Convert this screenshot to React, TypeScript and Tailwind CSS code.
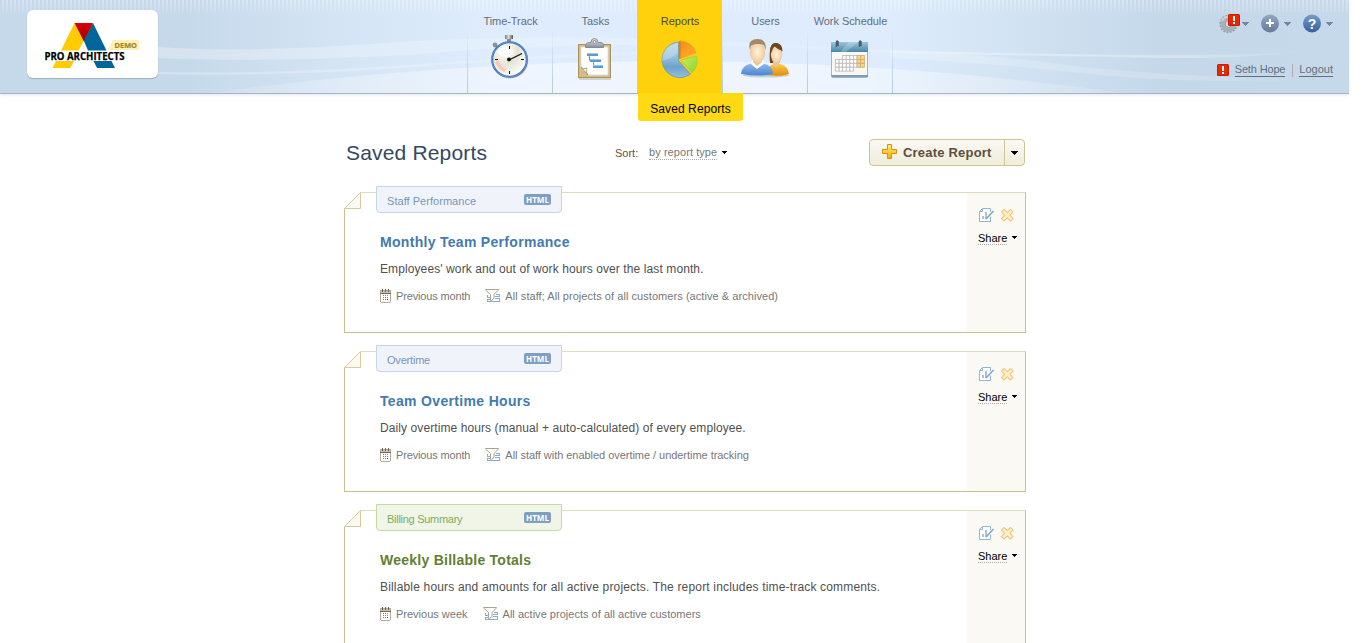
import React from "react";

function Caret({ className = "" }: { className?: string }) {
  return (
    <svg className={className} width="7" height="4" viewBox="0 0 7 4" shapeRendering="crispEdges">
      <path d="M0 0H7V1H6V2H5V3H4V4H3V3H2V2H1V1H0Z" fill="currentColor" />
    </svg>
  );
}

function SmallCaret({ className = "" }: { className?: string }) {
  return (
    <svg className={className} width="5" height="3" viewBox="0 0 5 3" shapeRendering="crispEdges">
      <path d="M0 0H5V1H4V2H3V3H2V2H1V1H0Z" fill="currentColor" />
    </svg>
  );
}

function Waves() {
  return (
    <svg className="absolute inset-0" width="1349" height="93" viewBox="0 0 1349 93">
      <defs>
        <linearGradient id="edge" x1="0" x2="1">
          <stop offset="0" stopColor="#c6d9ea" />
          <stop offset=".14" stopColor="#c6d9ea" />
          <stop offset=".26" stopColor="#d5e5f5" />
          <stop offset=".36" stopColor="#deecfd" />
          <stop offset=".5" stopColor="#dfecff" />
          <stop offset=".66" stopColor="#deecfd" />
          <stop offset=".75" stopColor="#d2e3f3" />
          <stop offset=".86" stopColor="#c5d8e9" />
          <stop offset="1" stopColor="#c6d9ea" />
        </linearGradient>
        <linearGradient id="stripeFade" x1="0" x2="0" y1="0" y2="1">
          <stop offset="0" stopColor="#fff" stopOpacity=".32" />
          <stop offset="1" stopColor="#fff" stopOpacity=".08" />
        </linearGradient>
        <linearGradient id="bandR" x1="0" x2="1">
          <stop offset="0" stopColor="#fff" stopOpacity=".35" />
          <stop offset=".7" stopColor="#fff" stopOpacity=".3" />
          <stop offset="1" stopColor="#fff" stopOpacity="0" />
        </linearGradient>
        <linearGradient id="bandL" x1="0" x2="1">
          <stop offset="0" stopColor="#fff" stopOpacity=".3" />
          <stop offset="1" stopColor="#fff" stopOpacity=".12" />
        </linearGradient>
        <linearGradient id="floor" x1="0" x2="1">
          <stop offset="0" stopColor="#fff" stopOpacity=".1" />
          <stop offset=".35" stopColor="#fff" stopOpacity=".5" />
          <stop offset=".65" stopColor="#fff" stopOpacity=".5" />
          <stop offset="1" stopColor="#fff" stopOpacity=".1" />
        </linearGradient>
        <pattern id="stripes" width="4" height="13" patternUnits="userSpaceOnUse">
          <rect x="2" width="2" height="13" fill="url(#stripeFade)" />
        </pattern>
      </defs>
      <rect width="1349" height="93" fill="url(#edge)" />
      <path d="M208 93Q440 62 670 61Q900 62 1125 93Z" fill="url(#floor)" />
      <path d="M158 47Q240 53 370 44T640 38L890 50V53Q620 36 420 54Q270 63 158 58Z" fill="url(#bandL)" />
      <path d="M158 72Q280 75 450 62T700 51V53Q520 58 430 66Q290 77 158 74Z" fill="url(#bandL)" />
      <path d="M890 50Q1220 60 1312 50Q1240 61 1120 57Q1000 55 890 53Z" fill="url(#bandR)" />
      <path d="M890 52Q980 53 1060 64T1312 80Q1180 84 1080 73T890 58Z" fill="url(#bandR)" opacity=".55" />
      <rect width="1349" height="13" fill="url(#stripes)" />
    </svg>
  );
}

function Logo() {
  return (
    <div className="relative mt-[10px] ml-[27px] h-[68px] w-[131px] rounded-md bg-white shadow-[0_1px_1px_#9badc1,0_0_1px_#b5c5d7]">
      <svg width="131" height="68" viewBox="0 0 131 68">
        <defs>
          <linearGradient id="logoRed" x1="0" x2="0" y1="0" y2="1">
            <stop stopColor="#d00" />
            <stop offset="1" stopColor="#980000" />
          </linearGradient>
        </defs>
        <path d="M47.500 13L57 30.500L51.500 40.500H34Z" fill="#fc0" />
        <path d="M66 13L79.500 40.500H61L56.500 30Z" fill="#069" />
        <path d="M47.500 13H66L56.700 31Z" fill="url(#logoRed)" />
        <path d="M29 51H47L43.500 58H25.500Z" fill="#fc0" />
        <path d="M66.500 51H84.500L88 58H70Z" fill="#069" />
        <path d="M86 30H112V40H81Z" fill="#fff0b5" />
        <text x="87.500" y="37.500" textLength="22.500" lengthAdjust="spacingAndGlyphs" fontFamily="Open Sans" fontWeight="700" fontSize="7.600" fill="#a48724" stroke="#a48724" strokeWidth=".2">DEMO</text>
        <text x="17.500" y="49.500" textLength="80" lengthAdjust="spacingAndGlyphs" fontFamily="Open Sans" fontWeight="700" fontSize="10" fill="#000" stroke="#000" strokeWidth=".25">PRO ARCHITECTS</text>
      </svg>
    </div>
  );
}

function Stopwatch() {
  return (
    <svg width="48" height="48" viewBox="0 0 48 48">
      <defs>
        <radialGradient id="dial" cx=".35" cy=".25" r=".8">
          <stop stopColor="#fffff9" />
          <stop offset=".5" stopColor="#e5e5d7" />
          <stop offset="1" stopColor="#fff" />
        </radialGradient>
        <linearGradient id="knob">
          <stop stopColor="#777" />
          <stop offset=".45" stopColor="#ddd" />
          <stop offset="1" stopColor="#555" />
        </linearGradient>
      </defs>
      <rect x="19" y="2" width="8" height="4" fill="url(#knob)" />
      <rect x="21" y="6" width="4" height="3" fill="#888" />
      <circle cx="9" cy="12" r="2.400" fill="#929292" />
      <path d="M10 13l2 2" stroke="#777" strokeWidth="2" />
      <circle cx="24.200" cy="27.400" r="18" fill="#637486" opacity=".4" />
      <circle cx="23.500" cy="26.500" r="17.300" fill="url(#dial)" stroke="#3e6fb9" strokeWidth="2.100" />
      <circle cx="23.500" cy="26.500" r="17.500" fill="none" stroke="#73a3e0" strokeWidth=".7" />
      <path d="M9.500 28.500A14 14 0 0 0 18.500 39L20 36A11 11 0 0 1 13 28Z" fill="#f8c6b4" />
      <ellipse cx="20" cy="19" rx="8" ry="5" fill="#fff" opacity=".7" />
      <path d="M23.500 13v3M23.500 38v3M9 26.500h3M35 26.500h3" stroke="#111" />
      <path d="M23 27L36 20.500" stroke="#111" strokeWidth="1.300" />
      <circle cx="23" cy="26.500" r="2" fill="#111" />
    </svg>
  );
}

function Clipboard() {
  return (
    <svg width="48" height="48" viewBox="0 0 48 48">
      <defs>
        <linearGradient id="clip" x1="0" x2="0" y1="0" y2="1">
          <stop stopColor="#eee" />
          <stop offset="1" stopColor="#858d96" />
        </linearGradient>
      </defs>
      <rect x="8" y="12" width="32" height="35" fill="#8b8265" opacity=".3" />
      <rect x="7.500" y="11.500" width="32" height="33" fill="#d3bd86" stroke="#a9925c" />
      <path d="M10 14H37V42H17L10 35Z" fill="#fff" stroke="#dde0e2" />
      <path d="M10 34Q11 37 15 35Q15 39 17 42H10Z" fill="#d3bd86" />
      <path d="M10 34Q12 37 16 35Q14 39 17 42Z" fill="#f8f6ec" stroke="#9a8e68" strokeWidth=".7" />
      <path d="M14.500 14.500V12Q15 10 18 9.500H20Q20 5.500 23.500 5.500T27 9.500H30Q32.500 10 32.500 12V14.500Z" fill="url(#clip)" stroke="#848b92" />
      <circle cx="23.500" cy="9" r="1.500" fill="#fff" stroke="#888" />
      <path d="M18.500 23v4.500h3M22.500 29v4.500h3" fill="none" stroke="#5c9bd1" />
      <path d="M16 20h11v3H16zM19 26h11v3H19zM22 32h10v3H22z" fill="#589bd5" />
      <path d="M16 20.500h11M19 26.500h11M22 32.500h10" stroke="#99c8ed" />
    </svg>
  );
}

function Pie() {
  return (
    <svg width="48" height="48" viewBox="0 0 48 48">
      <defs>
        <linearGradient id="pieBlue" x1="0" x2="0" y1="0" y2="1">
          <stop stopColor="#b4d3e8" />
          <stop offset=".45" stopColor="#91bddc" />
          <stop offset=".7" stopColor="#6da3cb" />
          <stop offset="1" stopColor="#92c0df" />
        </linearGradient>
        <linearGradient id="pieOrange" x1="0" x2="1" y1="0" y2="1">
          <stop stopColor="#f58a13" />
          <stop offset="1" stopColor="#ffb435" />
        </linearGradient>
        <linearGradient id="pieGreen" x1="0" x2="1" y1="0" y2="1">
          <stop stopColor="#c4f268" />
          <stop offset="1" stopColor="#8ed22e" />
        </linearGradient>
      </defs>
      <path d="M22.500 9A17.800 17.800 0 1 0 34.500 41L22.500 27.500Z" fill="url(#pieBlue)" stroke="#6d97b0" strokeWidth=".8" />
      <path d="M6 25Q7 13 22 10V20Q15 26 6 28Z" fill="#fff" opacity=".24" />
      <path d="M23.800 26V8Q34 9 39.800 20.500Z" fill="url(#pieOrange)" />
      <path d="M23.800 8V26" stroke="#c86a10" />
      <path d="M24 8A18 18 0 0 1 39.800 20" fill="none" stroke="#f29a22" strokeWidth="1.300" />
      <path d="M25 27L40.500 23A18 18 0 0 1 36 40Z" fill="url(#pieGreen)" stroke="#9ecb3a" strokeWidth=".7" />
    </svg>
  );
}

function People() {
  return (
    <svg width="50" height="48" viewBox="0 0 50 48">
      <defs>
        <radialGradient id="skin">
          <stop stopColor="#fff4de" />
          <stop offset="1" stopColor="#f0c99d" />
        </radialGradient>
        <linearGradient id="shirt" x1="0" x2="0" y1="0" y2="1">
          <stop stopColor="#92baf0" />
          <stop offset="1" stopColor="#4b85c8" />
        </linearGradient>
        <linearGradient id="orangeTop" x1="0" x2="0" y1="0" y2="1">
          <stop stopColor="#ffc84c" />
          <stop offset="1" stopColor="#df8e09" />
        </linearGradient>
      </defs>
      <ellipse cx="26" cy="42.500" rx="23" ry="2" fill="#8d9bae" opacity=".4" />
      <path d="M30 30Q28 10 36 10Q43 10 42 20L39 30H31Z" fill="#69481f" />
      <path d="M25 42Q26 34 34 31H40Q48 33 49 41Q42 44 25 42Z" fill="url(#orangeTop)" />
      <path d="M33 26H39V31L36 35L33 31Z" fill="#ecc292" />
      <ellipse cx="36.500" cy="21.500" rx="5.700" ry="8.500" fill="url(#skin)" />
      <path d="M30 19Q30 10 36 10Q42 11 42.500 18Q37 16 34 13L31 20Z" fill="#69481f" />
      <path d="M1 41Q1 33 11 30.500H23Q33 32 33 41Q20 44 1 41Z" fill="url(#shirt)" />
      <path d="M12 27H23L24 31L17 36L11 31Z" fill="#fff" />
      <path d="M13 24H22V29L17 33L13 29Z" fill="#edc592" />
      <ellipse cx="17.500" cy="19" rx="7.700" ry="11" fill="url(#skin)" />
      <path d="M10 17Q7 6 17.500 6Q27 6 25.500 17L24 12Q18 10 11 12.500Z" fill="#a48868" />
    </svg>
  );
}

function Calendar() {
  const cells = [[2, 0], [3, 0], [4, 0], [5, 0], [6, 0], [7, 0], [0, 1], [1, 1], [2, 1], [3, 1], [4, 1], [5, 1], [6, 1], [7, 1], [0, 2], [1, 2], [2, 2], [3, 2], [4, 2], [5, 2], [6, 2], [7, 2], [0, 3], [1, 3], [2, 3], [3, 3], [4, 3]];
  return (
    <svg width="48" height="48" viewBox="0 0 48 48">
      <defs>
        <linearGradient id="calTop" x1="0" x2="0" y1="0" y2="1">
          <stop stopColor="#9bc4da" />
          <stop offset="1" stopColor="#4885aa" />
        </linearGradient>
      </defs>
      <rect x="5.500" y="9.500" width="36" height="35" rx="1" fill="#f8f7f3" stroke="#a0b4c2" />
      <rect x="5" y="9" width="37" height="10" fill="url(#calTop)" />
      <path d="M23 9H32L20 19H14Z" fill="#fff" opacity=".22" />
      <path d="M5 42h37v2H6z" fill="#7b9eb8" />
      {cells.map(([x, y]) => (
        <rect key={`${x}-${y}`} x={9.5 + x * 3.6} y={22.5 + y * 3.9} width="3.600" height="3.900" fill={x > 5 && y < 3 ? "#ffd886" : "#fff"} stroke={x > 5 ? "#caa96e" : "#b9b9b6"} strokeWidth=".8" />
      ))}
      <path d="M10.500 14V9Q10.500 7.500 12 8.500V13M33.500 14V9Q33.500 7.500 35 8.500V13" fill="none" stroke="#525a61" strokeWidth="1.500" />
    </svg>
  );
}

function NavItem({ label, active = false, children }: { label: string; active?: boolean; children: React.ReactNode }) {
  return (
    <div
      className={
        active
          ? "relative flex w-[85px] flex-col items-center border-l border-[#bcd0e0] bg-[#ffd10c] pt-[14px] text-[#4a4939]"
          : "relative flex w-[85px] flex-col items-center pt-[14px] text-[#626f7c]"
      }
    >
      {!active && <span className="absolute top-0 left-0 h-full w-px bg-linear-to-b from-transparent from-30% to-[#b0cbe0]" />}
      <span className={active ? "text-[11px] leading-[15px] whitespace-nowrap" : "pl-[2px] text-[11px] leading-[15px] tracking-[-0.06px] whitespace-nowrap"}>{label}</span>
      <span className="mt-[4px]">{children}</span>
      {active && (
        <div className="absolute top-[93px] left-0 z-10 h-7 w-[105px] rounded-b-[3px] bg-[#ffd914] pt-[8px] text-center text-[12px] leading-[17px] tracking-[0.1px] whitespace-nowrap text-black">
          Saved Reports
        </div>
      )}
    </div>
  );
}

function Alert() {
  return (
    <svg width="12" height="12" viewBox="0 0 12 12">
      <rect width="12" height="12" rx="1.500" fill="#c91b00" />
      <rect x="1" y="1" width="10" height="10" fill="#e52900" />
      <path d="M5 2h2v5H5zM5 8h2v2H5z" fill="#fff" />
    </svg>
  );
}

function Tools() {
  return (
    <div className="flex h-[22px] items-center text-[#7188a5]">
      <span className="relative">
        <svg width="22" height="22" viewBox="0 0 22 22">
          <circle cx="10.500" cy="12" r="8.200" fill="none" stroke="#98a2ae" strokeWidth="2" strokeDasharray="1.900 1.320" />
          <circle cx="10.500" cy="12" r="6" fill="none" stroke="#a7afb9" strokeWidth="4" />
          <path d="M4 9A7 7 0 0 1 11 5" fill="none" stroke="#cbd1d7" strokeWidth="2" />
          <circle cx="10.500" cy="12" r="3.500" fill="#cddbe8" stroke="#87919d" />
        </svg>
        <span className="absolute top-[2px] left-[10px]"><Alert /></span>
      </span>
      <Caret className="mt-[2px] ml-[2px]" />
      <svg className="ml-[11px]" width="20" height="20" viewBox="0 0 20 20">
        <defs>
          <linearGradient id="addFill" x1="0" x2="0" y1="0" y2="1">
            <stop stopColor="#92a7c1" />
            <stop offset="1" stopColor="#637a99" />
          </linearGradient>
        </defs>
        <circle cx="10" cy="10.500" r="9" fill="url(#addFill)" />
        <path d="M10 6v8M6 10h8" stroke="#fff" strokeWidth="2" />
      </svg>
      <Caret className="mt-[2px] ml-[4px]" />
      <svg className="ml-[11px]" width="20" height="20" viewBox="0 0 20 20">
        <defs>
          <linearGradient id="helpFill" x1="0" x2="0" y1="0" y2="1">
            <stop stopColor="#789bcb" />
            <stop offset="1" stopColor="#365f9e" />
          </linearGradient>
        </defs>
        <circle cx="10" cy="10.500" r="9" fill="url(#helpFill)" />
        <text x="10" y="15.500" textAnchor="middle" fontFamily="Liberation Sans" fontWeight="700" fontSize="14" fill="#fff">?</text>
      </svg>
      <Caret className="mt-[2px] ml-[4px]" />
    </div>
  );
}

function Header() {
  return (
    <header className="relative h-[94px] w-[1349px] border-b border-[#a4b5c4] shadow-[0_1px_3px_#e5e7ea]">
      <Waves />
      <div className="relative flex h-full">
        <div className="w-[467px]"><Logo /></div>
        <nav className="flex h-[93px]">
          <NavItem label="Time-Track"><Stopwatch /></NavItem>
          <NavItem label="Tasks"><Clipboard /></NavItem>
          <NavItem label="Reports" active><Pie /></NavItem>
          <NavItem label="Users"><People /></NavItem>
          <NavItem label="Work Schedule"><Calendar /></NavItem>
          <span className="w-px bg-linear-to-b from-transparent from-30% to-[#b0cbe0]" />
        </nav>
        <div className="ml-auto flex flex-col items-end pt-[12px] pr-4">
          <Tools />
          <div className="mt-[28px] flex items-start text-[11px] leading-[14px] text-[#60717c]">
            <span className="mt-[2px] mr-[6px]"><Alert /></span>
            <span className="border-b border-[#60717c] tracking-[-0.15px]">Seth Hope</span>
            <span className="mt-[2px] mr-[6px] ml-[7px] h-[13px] w-px bg-[#b2aca9]" />
            <span className="border-b border-[#60717c]">Logout</span>
          </div>
        </div>
      </div>
    </header>
  );
}

type Report = {
  type: string;
  title: string;
  description: string;
  period: string;
  filter: string;
  green?: boolean;
  typeTracking: string;
  titleTracking: string;
  textTracking: string;
  periodTracking: string;
  filterTracking: string;
};

const reports: Report[] = [
  {
    type: "Staff Performance",
    title: "Monthly Team Performance",
    description: "Employees' work and out of work hours over the last month.",
    period: "Previous month",
    filter: "All staff; All projects of all customers (active & archived)",
    typeTracking: "tracking-[0.04px]",
    titleTracking: "tracking-[0.3px]",
    textTracking: "tracking-[0.1px]",
    periodTracking: "tracking-[-0.15px]",
    filterTracking: "tracking-[0.055px]",
  },
  {
    type: "Overtime",
    title: "Team Overtime Hours",
    description: "Daily overtime hours (manual + auto-calculated) of every employee.",
    period: "Previous month",
    filter: "All staff with enabled overtime / undertime tracking",
    typeTracking: "tracking-[-0.2px]",
    titleTracking: "tracking-[0.33px]",
    textTracking: "tracking-[0.09px]",
    periodTracking: "tracking-[-0.15px]",
    filterTracking: "tracking-[-0.04px]",
  },
  {
    type: "Billing Summary",
    title: "Weekly Billable Totals",
    description: "Billable hours and amounts for all active projects. The report includes time-track comments.",
    period: "Previous week",
    filter: "All active projects of all active customers",
    green: true,
    typeTracking: "tracking-[-0.28px]",
    titleTracking: "tracking-[0.25px]",
    textTracking: "tracking-[0.17px]",
    periodTracking: "tracking-normal",
    filterTracking: "tracking-[0.02px]",
  },
];

function PeriodIcon() {
  return (
    <svg width="11" height="14" viewBox="0 0 11 14" shapeRendering="crispEdges">
      <path d="M0 1h11v12h-1v1H1v-1H0z" fill="#b3aa9a" />
      <path d="M1 5h9v8H1z" fill="#fff" />
      <path d="M1 2h9v2H1z" fill="#c9c0ac" />
      <path d="M0 4h11v1H0z" fill="#706453" />
      <path d="M2 0h1v3H2zM5 0h1v3H5zM8 0h1v3H8z" fill="#6c6252" />
      <path d="M3 6h1v1H3zM5 6h1v1H5zM7 6h1v1H7zM3 8h1v1H3zM5 8h1v1H5zM7 8h1v1H7zM3 10h1v1H3zM5 10h1v1H5z" fill="#8c8270" />
      <path d="M7 10h1v1H7z" fill="#d00" />
    </svg>
  );
}

function FilterIcon() {
  return (
    <svg width="16" height="14" viewBox="0 0 16 14" shapeRendering="crispEdges">
      <path d="M2 6h1v3H2zM2 10h1v3H2zM2 12h13v1H2zM14 9h1v4h-1zM10 9h5v1h-5zM10 7h5v1h-5zM11 5h4v1h-4zM14 5h1v3h-1zM3 8h2v1H3zM3 10h2v1H3z" fill="#86acd0" />
      <path d="M.5 .5H13.500V1L9 5.500V9.500L6.500 11.500H5.500V5.500L.5 1Z" fill="#fff" stroke="#aaa38e" shapeRendering="auto" />
    </svg>
  );
}

function EditIcon() {
  return (
    <svg width="16" height="15" viewBox="0 0 16 15">
      <path d="M3.500.5H11.500V13.500H.5V3.500ZM3.500 1V3.500H1" fill="#fff" stroke="#94b5d2" />
      <path d="M3 8h2v3H3zM6 4h2v7H6z" fill="#a8c4dc" />
      <path d="M9.500 8.500L14.500 3" stroke="#fff" strokeWidth="3" />
      <path d="M7 11L14.500 3" stroke="#86a5c3" strokeWidth="1.700" />
    </svg>
  );
}

function DeleteIcon() {
  return (
    <svg width="13" height="13" viewBox="0 0 13 13">
      <path d="M3 3L9.500 9.500M9.500 3L3 9.500" stroke="#f4c07c" strokeWidth="4.600" strokeLinecap="square" />
      <path d="M3 3L9.500 9.500M9.500 3L3 9.500" stroke="#fff1c6" strokeWidth="2.600" strokeLinecap="square" />
    </svg>
  );
}

function ReportCard({ report }: { report: Report }) {
  return (
    <article className="relative flex h-[141px] border border-[#c9c18d] border-t-[#e1dcbb] bg-white">
      <svg className="absolute -top-px -left-px" width="17" height="17" viewBox="0 0 17 17">
        <path d="M0 0H17L0 17Z" fill="#fff" />
        <path d="M.5 16.500L16.500.5V16.500Z" fill="#fbf9f2" stroke="#d5cb9e" />
      </svg>
      <div
        className={
          report.green
            ? "absolute -top-[7px] left-[31px] flex h-[27px] w-[186px] items-center rounded-b-[4px] border border-[#c5d9a5] bg-[#f1f5e7] px-[10px] pt-[3px] text-[#7cad5c]"
            : "absolute -top-[7px] left-[31px] flex h-[27px] w-[186px] items-center rounded-b-[4px] border border-[#c5d5e6] bg-[#f0f4fa] px-[10px] pt-[3px] text-[#7495c3]"
        }
      >
        <span className={`text-[11px] leading-4 whitespace-nowrap ${report.typeTracking}`}>{report.type}</span>
        <svg className="mb-[3px] ml-auto" width="27" height="11" viewBox="0 0 27 11">
          <rect width="27" height="11" rx="2" fill="#7e9fc2" />
          <text x="2" y="8.800" textLength="23" lengthAdjust="spacingAndGlyphs" fontFamily="Open Sans" fontWeight="700" fontSize="9.200" fill="#fff">HTML</text>
        </svg>
      </div>
      <div className="w-[622px] pt-[40px] pl-[35px]">
        <h2 className={`text-[14px] leading-[18px] font-bold whitespace-nowrap ${report.titleTracking} ${report.green ? "text-[#647e33]" : "text-[#427bad]"}`}>{report.title}</h2>
        <p className={`mt-[10px] text-[12px] leading-4 whitespace-nowrap text-[#505050] ${report.textTracking}`}>{report.description}</p>
        <div className="mt-[12px] flex h-[14px] items-center text-[11px] leading-[14px] whitespace-nowrap text-[#777]">
          <PeriodIcon />
          <span className={`ml-[5px] ${report.periodTracking}`}>{report.period}</span>
          <span className="ml-[15px]"><FilterIcon /></span>
          <span className={`ml-[4px] ${report.filterTracking}`}>{report.filter}</span>
        </div>
      </div>
      <div className="w-[58px] bg-[#faf9f4] pt-[15px] pl-[11px]">
        <div className="flex items-center gap-[6px] pl-px">
          <EditIcon />
          <DeleteIcon />
        </div>
        <div className="mt-[9px] flex items-center text-[11px] leading-[12px] text-black">
          <span className="border-b border-dotted border-[#aaa]">Share</span>
          <SmallCaret className="mb-[2px] ml-[5px]" />
        </div>
      </div>
    </article>
  );
}

export default function App() {
  return (
    <div className="h-[643px] w-full overflow-hidden bg-white font-['Liberation_Sans',Arial,sans-serif]">
      <Header />
      <main className="ml-[344px] w-[682px] pt-[45px]">
        <div className="flex h-[27px] items-center">
          <h1 className="w-[271px] pl-[2px] text-[21px] leading-[27px] tracking-[0.17px] text-[#33485f]">Saved Reports</h1>
          <div className="flex items-center pt-px text-[11px] leading-[13px]">
            <span className="w-[34px] text-[#675338]">Sort:</span>
            <span className="border-b border-dotted border-[#aaa] tracking-[0.07px] text-[#777]">by report type</span>
            <SmallCaret className="mb-px ml-[5px]" />
          </div>
          <button className="mr-px ml-auto flex h-[27px] w-[156px] items-center rounded-[4px] border border-[#cec590] bg-linear-to-b from-[#faf9f5] to-[#efecda]">
            <svg className="mb-px ml-[12px]" width="16" height="16" viewBox="0 0 16 16">
              <defs>
                <linearGradient id="plusGold" x1="0" x2="0" y1="0" y2="1">
                  <stop stopColor="#ffed79" />
                  <stop offset="1" stopColor="#f5ae08" />
                </linearGradient>
              </defs>
              <path d="M5.500.5h4v5h5v4h-5v5h-4v-5h-5v-4h5Z" fill="url(#plusGold)" stroke="#db8e08" />
            </svg>
            <span className="ml-[5px] text-[13px] font-bold tracking-[0.2px] whitespace-nowrap text-[#5c503d]">Create Report</span>
            <span className="ml-auto flex h-full w-5 items-center justify-center border-l border-[#cec590] pt-px text-black"><Caret /></span>
          </button>
        </div>
        <section className="mt-[26px] flex flex-col gap-[18px]">
          {reports.map((report) => <ReportCard key={report.title} report={report} />)}
        </section>
      </main>
    </div>
  );
}
